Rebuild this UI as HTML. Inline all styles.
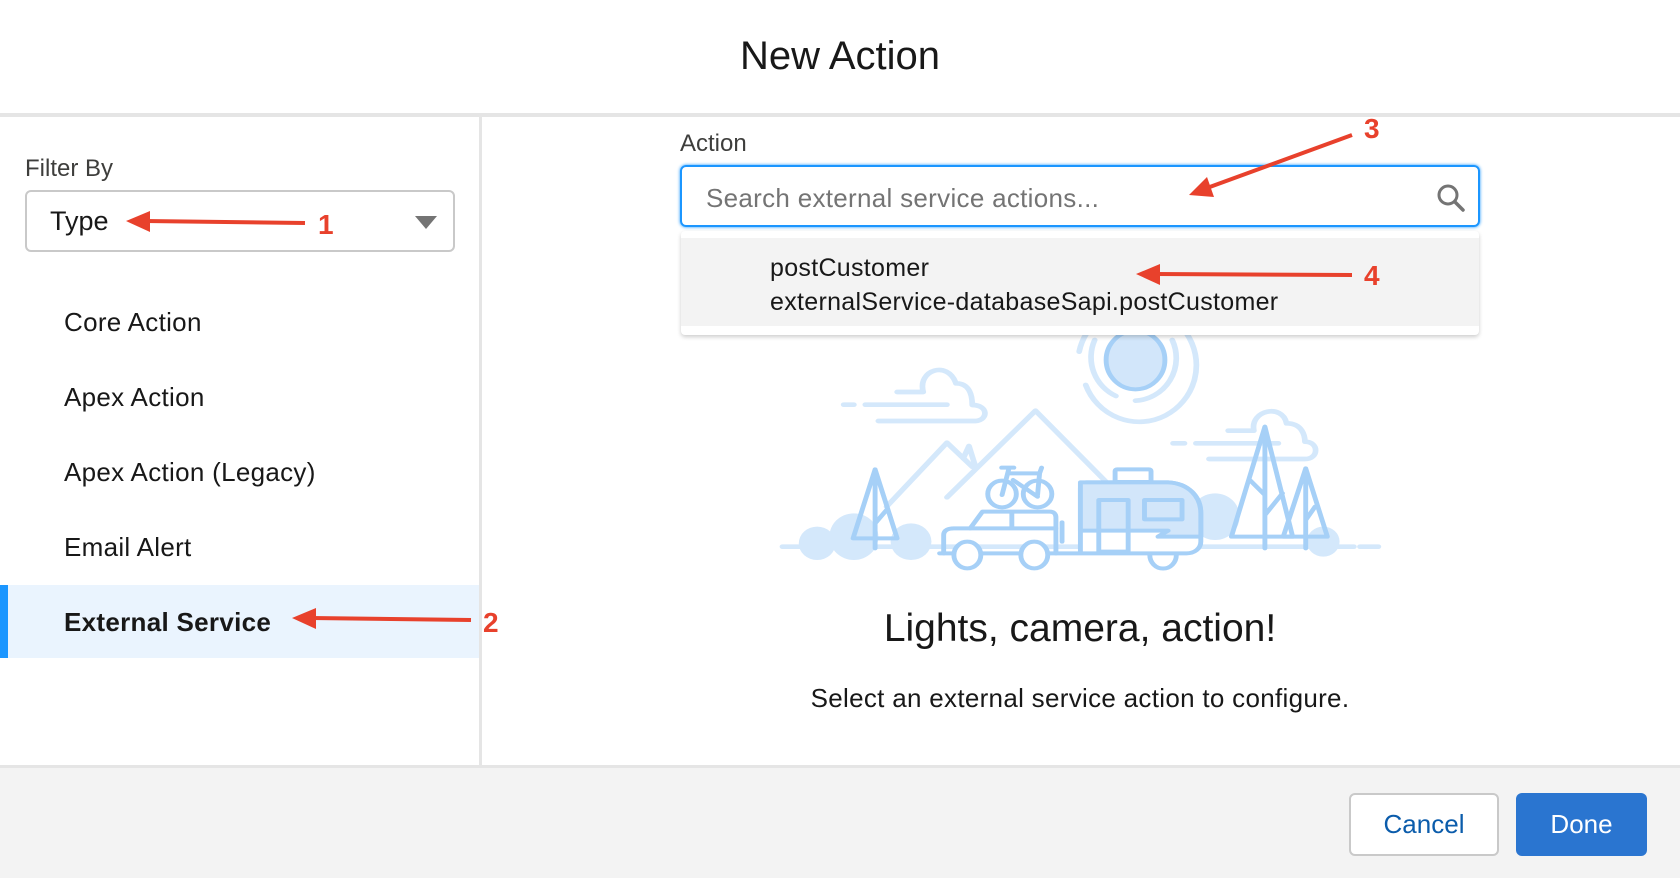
<!DOCTYPE html>
<html><head><meta charset="utf-8"><style>
*{box-sizing:border-box;margin:0;padding:0}
body{width:1680px;height:878px;overflow:hidden;background:#fff;font-family:"Liberation Sans",Arial,sans-serif;color:#181818;position:relative}
.abs{position:absolute}
.title{left:0;width:1680px;top:34px;text-align:center;font-size:40px;color:#181818}
.hline{left:0;top:113px;width:1680px;height:4px;background:#e5e5e5}
.vline{left:479px;top:117px;width:3px;height:648px;background:#e5e5e5}
.footer{left:0;top:765px;width:1680px;height:113px;background:#f3f3f3;border-top:3px solid #e5e5e5}
.lbl{font-size:24px;color:#3e3e3c}
.sel{left:25px;top:190px;width:430px;height:62px;border:2px solid #c9c9c9;border-radius:6px}
.nav{left:64px;font-size:26px;letter-spacing:0.3px;color:#181818}
.active{left:0;top:585px;width:479px;height:73px;background:#eaf4fe}
.bar{left:0;top:585px;width:8px;height:73px;background:#1b96ff}
.search{left:680px;top:165px;width:800px;height:62px;border:2px solid #1b96ff;border-radius:6px;box-shadow:0 0 3px #1b96ff}
.dd{left:681px;top:231px;width:798px;height:104px;background:#fff;border-radius:4px;box-shadow:0 2px 4px rgba(0,0,0,.2);z-index:3}
.item{left:0;top:7px;width:798px;height:88px;background:#f3f3f3}
.btn{border-radius:6px;font-size:26px;text-align:center;line-height:59px}
</style></head><body>
<div class="abs title">New Action</div>
<div class="abs hline"></div>
<div class="abs vline"></div>
<div class="abs footer"></div>

<div class="abs lbl" style="left:25px;top:155px">Filter By</div>
<div class="abs sel"></div>
<div class="abs" style="left:50px;top:206px;font-size:27px">Type</div>
<svg class="abs" style="left:415px;top:216px" width="22" height="14"><polygon points="0,0 22,0 11,13" fill="#747474"/></svg>

<div class="abs nav" style="top:307px">Core Action</div>
<div class="abs nav" style="top:382px">Apex Action</div>
<div class="abs nav" style="top:457px">Apex Action (Legacy)</div>
<div class="abs nav" style="top:532px">Email Alert</div>
<div class="abs active"></div><div class="abs bar"></div>
<div class="abs nav" style="top:607px;font-weight:bold">External Service</div>

<div class="abs lbl" style="left:680px;top:130px">Action</div>
<div class="abs search"></div>
<div class="abs" style="left:706px;top:183px;font-size:26px;letter-spacing:0.3px;color:#747474">Search external service actions...</div>
<svg class="abs" style="left:1436px;top:183px" width="30" height="30" viewBox="0 0 30 30"><circle cx="12" cy="12" r="9" fill="none" stroke="#747474" stroke-width="3"/><line x1="19" y1="19" x2="27" y2="27" stroke="#747474" stroke-width="3.5" stroke-linecap="round"/></svg>

<div class="abs dd"><div class="abs item"></div>
<div class="abs" style="left:89px;top:23px;font-size:25px;letter-spacing:0.3px">postCustomer</div>
<div class="abs" style="left:89px;top:57px;font-size:25px;letter-spacing:0.3px">externalService-databaseSapi.postCustomer</div>
</div>

<svg class="abs" style="left:760px;top:320px" width="640" height="260" viewBox="0 0 1568 780" preserveAspectRatio="none">
<g fill="none" stroke-linecap="round" stroke-linejoin="round">
<g stroke="#d4e8fb" stroke-width="14">
<path d="M782 95 A140 170 0 0 1 800 40"/>
<path d="M798 195 A140 170 0 1 0 1045 40"/>
<path d="M872 228 A105 128 0 0 1 820 60"/>
<path d="M920 242 A105 128 0 0 0 1010 60"/>
<path d="M310 560 L458 368 L520 440"/><path d="M498 415 L512 378 L528 440"/>
<path d="M458 532 L675 272 L850 488"/>
<path d="M336 216 H400 M400 216 C385 150 460 120 480 190 C515 190 520 230 520 255 C560 255 560 300 528 303 H290 M205 254 H230 M258 254 H458"/>
<path d="M1147 332 H1210 C1200 270 1280 250 1290 310 C1330 310 1335 350 1335 365 C1370 365 1370 417 1335 417 H1100 M1012 370 H1040 M1068 370 H1270"/>
<path d="M55 680 H1455 M1470 680 H1515"/>
</g>
<g fill="#d4e8fb" stroke="none">
<ellipse cx="230" cy="650" rx="60" ry="70"/><ellipse cx="140" cy="670" rx="45" ry="50"/><ellipse cx="370" cy="665" rx="50" ry="55"/>
<ellipse cx="1115" cy="590" rx="60" ry="70"/><ellipse cx="1380" cy="665" rx="40" ry="45"/>
</g>
<ellipse cx="920" cy="120" rx="72" ry="88" fill="#d2e6fa" stroke="#a6d0f7" stroke-width="12"/>
<g stroke="#a6d0f7" stroke-width="12">
<path d="M282 448 L228 655 H336 Z M282 448 V685 M282 610 L310 570"/>
<path d="M1237 320 L1155 650 H1305 Z M1237 320 V685 M1237 585 L1280 520 M1237 525 L1200 480"/>
<path d="M1337 445 L1282 650 H1390 Z M1337 445 V685 M1337 600 L1360 560"/>
<path d="M440 700 H470 M545 700 H635 M710 700 H1045 C1065 700 1080 685 1080 665 V580 C1080 530 1050 490 1000 487 H800 C790 487 785 495 785 505 V700" fill="#fff"/>
<path d="M785 487 H1000 C1050 490 1080 530 1080 580 V650 H975 L1000 632 H785 Z" fill="#d2e6fa"/>
<rect x="870" y="448" width="88" height="38" rx="5"/>
<rect x="830" y="540" width="72" height="155"/>
<rect x="942" y="540" width="92" height="58" fill="#d2e6fa"/>
<path d="M450 700 V645 C450 630 462 625 475 625 H515 L545 575 H710 C720 575 725 582 725 592 V700"/>
<path d="M515 625 H725 M617 578 V625"/>
<path d="M740 607 V665"/>
<ellipse cx="508" cy="705" rx="33" ry="40" fill="#fff"/><ellipse cx="672" cy="705" rx="33" ry="40" fill="#fff"/>
<path d="M955 705 A32 40 0 0 0 1020 705" />
<ellipse cx="593" cy="522" rx="35" ry="40" fill="#fff"/><ellipse cx="680" cy="522" rx="35" ry="40" fill="#fff"/>
<path d="M593 525 L610 445 M592 443 H622 M612 460 H685 L680 525 M620 480 L680 530 M685 460 L690 443"/>
</g>
</g>
</svg>

<div class="abs" style="left:0;width:2160px;top:607px;text-align:center;font-size:39px;color:#181818">Lights, camera, action!</div>
<div class="abs" style="left:0;width:2160px;top:683px;text-align:center;font-size:26px;letter-spacing:0.3px;color:#181818">Select an external service action to configure.</div>

<div class="abs btn" style="left:1349px;top:793px;width:150px;height:63px;background:#fff;border:2px solid #c9c9c9;color:#0b5cab">Cancel</div>
<div class="abs btn" style="left:1516px;top:793px;width:131px;height:63px;background:#2a75d0;color:#fff;line-height:63px">Done</div>

<svg class="abs" style="left:0;top:0;z-index:5" width="1680" height="878">
<g stroke="#e8412c" stroke-width="4" fill="#e8412c">
<line x1="305" y1="223" x2="145" y2="221"/><polygon points="126,221 150,211 150,232" stroke="none"/>
<line x1="471" y1="620" x2="311" y2="618"/><polygon points="292,618 316,608 316,629" stroke="none"/>
<line x1="1352" y1="135" x2="1207" y2="188"/><polygon points="1189,195 1207,177 1214,197" stroke="none"/>
<line x1="1352" y1="275" x2="1155" y2="274"/><polygon points="1136,274 1160,264 1160,285" stroke="none"/>
</g>
<g fill="#e8412c" font-family="Liberation Sans" font-weight="bold" font-size="28">
<text x="318" y="234">1</text><text x="483" y="632">2</text><text x="1364" y="138">3</text><text x="1364" y="285">4</text>
</g>
</svg>
</body></html>
